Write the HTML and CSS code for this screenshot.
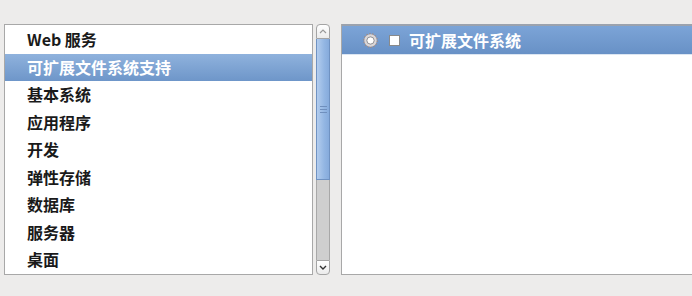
FILE: index.html
```html
<!DOCTYPE html>
<html lang="zh-CN">
<head>
    <meta charset="UTF-8">
    <title>软件组选择</title>
    <link rel="stylesheet" href="styles.css">
</head>
<body>
    <div class="chooser">
        <ul class="group-list">
            <li>Web 服务</li>
            <li class="selected">可扩展文件系统支持</li>
            <li>基本系统</li>
            <li>应用程序</li>
            <li>开发</li>
            <li>弹性存储</li>
            <li>数据库</li>
            <li>服务器</li>
            <li>桌面</li>
        </ul>

        <div class="scrollbar">
            <div class="scroll-btn up">
                <svg width="8" height="5" viewBox="0 0 8 5"><path d="M1 4 L4 1 L7 4" fill="none" stroke="#9a9a9a" stroke-width="1.2"/></svg>
            </div>
            <div class="thumb">
                <span class="grip"></span>
            </div>
            <div class="trough"></div>
            <div class="scroll-btn down">
                <svg width="8" height="5" viewBox="0 0 8 5"><path d="M1 1 L4 4 L7 1" fill="none" stroke="#333" stroke-width="1.4"/></svg>
            </div>
        </div>

        <div class="detail-panel">
            <div class="detail-row">
                <svg class="gear" width="15" height="15" viewBox="0 0 15 15">
                    <circle cx="7.5" cy="7.5" r="6.4" fill="none" stroke="#9c8b88" stroke-width="2" stroke-dasharray="1.6 1.2"/>
                    <circle cx="7.5" cy="7.5" r="5" fill="none" stroke="#dcd7d6" stroke-width="2.4"/>
                    <circle cx="7.5" cy="7.5" r="3.6" fill="#ffffff" stroke="#8a8584" stroke-width="0.8"/>
                </svg>
                <span class="check"></span>
                <span class="detail-label">可扩展文件系统</span>
            </div>
        </div>
    </div>
</body>
</html>
```

FILE: styles.css
```css
body {
    margin: 0;
    padding: 24px 0 0 4px;
    background-color: #edeceb;
    font-family: "Noto Sans CJK SC", "DejaVu Sans", sans-serif;
    overflow: hidden;
}
.chooser {
    display: flex;
    height: 251px;
}
.group-list {
    list-style: none;
    margin: 0;
    padding: 0;
    width: 307px;
    flex-shrink: 0;
    border: 1px solid #a8a8a8;
    background-color: #fff;
}
.group-list li {
    height: 27.5px;
    line-height: 27.5px;
    padding-left: 22px;
    font-size: 16px;
    font-weight: 700;
    color: #1a1a1a;
    white-space: nowrap;
}
.group-list li:first-child {
    height: 28.5px;
    line-height: 28.5px;
}
.group-list li.selected {
    color: #fff;
    background: linear-gradient(#8fb2dd, #6e96c9);
}
.scrollbar {
    width: 14px;
    flex-shrink: 0;
    margin-left: 3px;
    display: flex;
    flex-direction: column;
}
.scroll-btn {
    height: 13px;
    border: 1px solid #a4a4a4;
    background: linear-gradient(#ffffff, #ebebeb);
    display: flex;
    align-items: center;
    justify-content: center;
}
.scroll-btn.up {
    border-radius: 4px 4px 0 0;
}
.scroll-btn.down {
    border-radius: 0 0 4px 4px;
}
.thumb {
    height: 140px;
    border: 1px solid #6f92c2;
    border-top: none;
    background: linear-gradient(90deg, #b3cdee, #93b6e3 60%, #86abdc);
    display: flex;
    align-items: center;
    justify-content: center;
}
.grip {
    width: 7px;
    height: 5px;
    border-top: 1px solid #6f8fbd;
    border-bottom: 1px solid #6f8fbd;
    position: relative;
}
.grip::after {
    content: "";
    position: absolute;
    left: 0;
    right: 0;
    top: 2px;
    border-top: 1px solid #6f8fbd;
}
.trough {
    flex: 1;
    border-left: 1px solid #a8a8a8;
    border-right: 1px solid #a8a8a8;
    background-color: #cfcfcf;
}
.detail-panel {
    width: 380px;
    flex-shrink: 0;
    margin-left: 11px;
    border: 1px solid #a8a8a8;
    background-color: #fff;
}
.detail-row {
    height: 28px;
    border-top: 2px solid #9ba2ad;
    margin-top: -1px;
    border-bottom: 1px solid #dce6f2;
    background: linear-gradient(#7ca4d7, #6891c6);
    display: flex;
    align-items: center;
    padding-left: 21px;
}
.gear {
    flex-shrink: 0;
    margin-right: 11px;
}
.check {
    flex-shrink: 0;
    width: 9px;
    height: 9px;
    background-color: #fff;
    border: 1px solid #8a8a8a;
    margin-right: 9px;
}
.detail-label {
    color: #fff;
    font-size: 16px;
    font-weight: 700;
}
```
